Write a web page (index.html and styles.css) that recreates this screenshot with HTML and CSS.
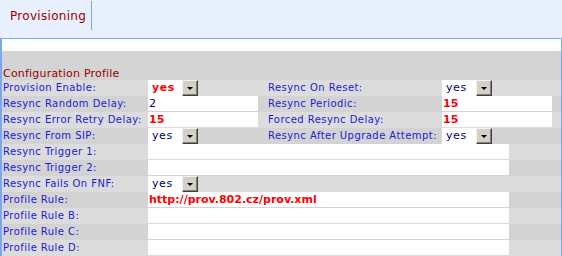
FILE: index.html
```html
<!DOCTYPE html>
<html lang="en">
<head>
    <meta charset="UTF-8">
    <title>Provisioning</title>
    <link rel="stylesheet" href="styles.css">
</head>
<body>
    <div class="topbar">
        <div class="tab">Provisioning</div>
    </div>
    <div class="panel">
        <div class="spacer"></div>
        <div class="section">Configuration Profile</div>
        <table class="cfg">
            <tr class="light">
                <td class="lbl">Provision Enable:</td>
                <td><span class="sel red"><span class="sel-val">yes</span><span class="sel-btn"></span></span></td>
                <td class="lbl2">Resync On Reset:</td>
                <td><span class="sel"><span class="sel-val">yes</span><span class="sel-btn"></span></span></td>
                <td class="end"></td>
            </tr>
            <tr class="dark">
                <td class="lbl">Resync Random Delay:</td>
                <td><span class="inp">2</span></td>
                <td class="lbl2">Resync Periodic:</td>
                <td><span class="inp red">15</span></td>
                <td class="end"></td>
            </tr>
            <tr class="light">
                <td class="lbl">Resync Error Retry Delay:</td>
                <td><span class="inp red">15</span></td>
                <td class="lbl2">Forced Resync Delay:</td>
                <td><span class="inp red">15</span></td>
                <td class="end"></td>
            </tr>
            <tr class="dark">
                <td class="lbl">Resync From SIP:</td>
                <td><span class="sel"><span class="sel-val">yes</span><span class="sel-btn"></span></span></td>
                <td class="lbl2">Resync After Upgrade Attempt:</td>
                <td><span class="sel"><span class="sel-val">yes</span><span class="sel-btn"></span></span></td>
                <td class="end"></td>
            </tr>
            <tr class="light">
                <td class="lbl">Resync Trigger 1:</td>
                <td colspan="4"><span class="inp wide"></span></td>
            </tr>
            <tr class="dark">
                <td class="lbl">Resync Trigger 2:</td>
                <td colspan="4"><span class="inp wide"></span></td>
            </tr>
            <tr class="light">
                <td class="lbl">Resync Fails On FNF:</td>
                <td colspan="4"><span class="sel"><span class="sel-val">yes</span><span class="sel-btn"></span></span></td>
            </tr>
            <tr class="dark">
                <td class="lbl">Profile Rule:</td>
                <td colspan="4"><span class="inp wide red">http://prov.802.cz/prov.xml</span></td>
            </tr>
            <tr class="light">
                <td class="lbl">Profile Rule B:</td>
                <td colspan="4"><span class="inp wide"></span></td>
            </tr>
            <tr class="dark">
                <td class="lbl">Profile Rule C:</td>
                <td colspan="4"><span class="inp wide"></span></td>
            </tr>
            <tr class="light">
                <td class="lbl">Profile Rule D:</td>
                <td colspan="4"><span class="inp wide"></span></td>
            </tr>
        </table>
    </div>
</body>
</html>
```

FILE: styles.css
```css
body {
    margin: 0;
    background-color: #ffffff;
    font-family: "DejaVu Sans", Verdana, sans-serif;
    overflow: hidden;
}
.topbar {
    height: 38px;
    background-color: #e8effd;
    box-sizing: border-box;
    padding-top: 1px;
}
.tab {
    display: inline-block;
    height: 29px;
    line-height: 31px;
    padding: 0 5px 0 10px;
    border-right: 1px solid #7aa7f0;
    color: #990000;
    font-size: 12px;
    letter-spacing: 0.3px;
}
.panel {
    border-top: 1px solid #7aa7f0;
    border-left: 2px solid #7aa7f0;
    border-right: 1px solid #7aa7f0;
    width: 559px;
}
.spacer {
    height: 12px;
    background: #ffffff;
}
.section {
    height: 29px;
    line-height: 12px;
    box-sizing: border-box;
    padding: 17px 0 0 1px;
    background-color: #d4d4d4;
    color: #990000;
    font-size: 11px;
    letter-spacing: 0.2px;
}
.cfg {
    border-collapse: collapse;
    width: 559px;
    table-layout: fixed;
}
.cfg td {
    height: 16px;
    padding: 0;
    font-size: 10px;
    vertical-align: top;
    white-space: nowrap;
}
.cfg tr.light { background-color: #dcdcdc; }
.cfg tr.dark { background-color: #d3d3d3; }
.cfg td.lbl {
    width: 145px;
    padding-left: 1px;
    color: #1a1ad6;
    line-height: 16px;
    letter-spacing: 0.45px;
}
.cfg td.lbl2 {
    width: 174px;
    padding-left: 6px;
    color: #1a1ad6;
    line-height: 16px;
    letter-spacing: 0.45px;
}
.cfg td:nth-child(2) { width: 114px; }
.cfg td:nth-child(4) { width: 110px; }
.cfg td.end { width: 9px; }
.inp {
    display: block;
    width: 110px;
    height: 15px;
    background: #ffffff;
    color: #000080;
    font-size: 11px;
    line-height: 15px;
    box-sizing: border-box;
    padding-left: 1px;
}
.inp.wide { width: 361px; }
.red {
    color: #ff0000;
    font-weight: bold;
}
.sel {
    display: flex;
    width: 50px;
    height: 16px;
}
.sel-val {
    flex: 1;
    background: #ffffff;
    color: #000080;
    font-size: 11px;
    line-height: 15px;
    padding-left: 4px;
    letter-spacing: 0.6px;
}
.sel.red .sel-val { color: #ff0000; }
.sel-btn {
    width: 16px;
    height: 16px;
    box-sizing: border-box;
    background: #d4d0c8;
    border-top: 1px solid #f4f2ee;
    border-left: 1px solid #f4f2ee;
    border-right: 1px solid #404040;
    border-bottom: 1px solid #404040;
    box-shadow: inset -1px -1px 0 #808080;
    position: relative;
}
.sel-btn::after {
    content: "";
    position: absolute;
    left: 4px;
    top: 6px;
    border-left: 3px solid transparent;
    border-right: 3px solid transparent;
    border-top: 3px solid #000000;
}
```
